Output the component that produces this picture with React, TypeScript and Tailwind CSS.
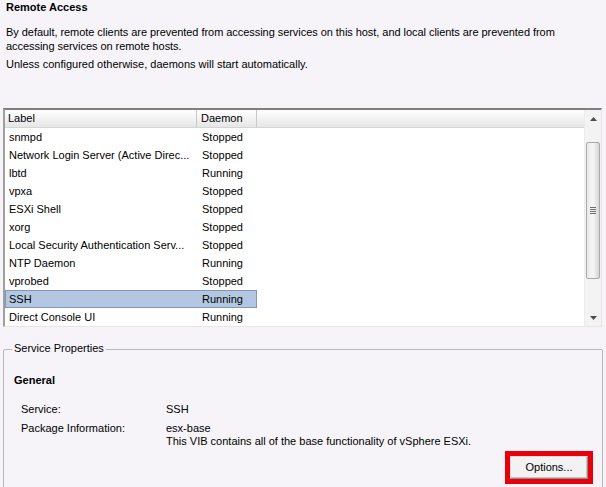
import React from 'react';

const rows: [string, string][] = [
  ['snmpd', 'Stopped'],
  ['Network Login Server (Active Direc...', 'Stopped'],
  ['lbtd', 'Running'],
  ['vpxa', 'Stopped'],
  ['ESXi Shell', 'Stopped'],
  ['xorg', 'Stopped'],
  ['Local Security Authentication Serv...', 'Stopped'],
  ['NTP Daemon', 'Running'],
  ['vprobed', 'Stopped'],
  ['SSH', 'Running'],
  ['Direct Console UI', 'Running'],
];

function ScrollBar() {
  return (
    <div className="w-[17px] flex flex-col bg-[#f3f3f3] border-l border-[#ececec]">
      <div className="h-[17px] flex items-center justify-center">
        <svg width="7" height="4" viewBox="0 0 7 4">
          <path d="M0 4 L3.5 0 L7 4 Z" fill="#4d4d4d" />
        </svg>
      </div>
      <div className="mt-[15px] mx-[1px] h-[137px] rounded-[2px] border border-[#a9a9a9] bg-gradient-to-r from-[#e9e9e9] via-[#f6f6f6] to-[#d6d6d6] flex items-center justify-center">
        <div className="flex flex-col gap-[1px]">
          <div className="w-[6px] h-[1px] bg-[#6f6f6f]" />
          <div className="w-[6px] h-[1px] bg-[#6f6f6f]" />
          <div className="w-[6px] h-[1px] bg-[#6f6f6f]" />
          <div className="w-[6px] h-[1px] bg-[#6f6f6f]" />
        </div>
      </div>
      <div className="flex-1" />
      <div className="h-[17px] flex items-center justify-center">
        <svg width="7" height="4" viewBox="0 0 7 4">
          <path d="M0 0 L3.5 4 L7 0 Z" fill="#4d4d4d" />
        </svg>
      </div>
    </div>
  );
}

export default function App() {
  return (
    <div
      className="w-[606px] h-[487px] overflow-hidden bg-[#f6f4f8] text-[11px] text-black leading-[13px]"
      style={{ fontFamily: '"Liberation Sans", Arial, sans-serif' }}
    >
      <div className="pl-[6px] pt-[1px] font-bold text-[11px]">Remote Access</div>
      <div className="pl-[6px] pt-[11px] pr-[30px] leading-[14px] tracking-[-0.05px]">
        By default, remote clients are prevented from accessing services on this host, and local clients are prevented from accessing services on remote hosts.
      </div>
      <div className="pl-[6px] pt-[5px]">Unless configured otherwise, daemons will start automatically.</div>

      {/* daemon list */}
      <div className="ml-[3px] mr-[4px] mt-[37px] h-[219px] flex border-t-2 border-l-2 border-t-[#7f7f7f] border-l-[#a0a0a0] border-r border-b border-r-[#e6e6e6] border-b-[#e6e6e6] bg-white">
        <div className="flex-1 flex flex-col">
          <div className="h-[18px] flex bg-gradient-to-b from-[#ffffff] to-[#e6e6e6] border-b border-[#d5d5d5]">
            <div className="w-[192px] pl-[3px] flex items-center border-r border-[#c9c9c9]">Label</div>
            <div className="w-[60px] pl-[4px] flex items-center border-r border-[#c9c9c9]">Daemon</div>
            <div className="flex-1" />
          </div>
          {rows.map(([label, state]) => (
            <div
              key={label}
              className={`h-[18px] w-[252px] flex items-center ${
                label === 'SSH' ? 'bg-[#b3c7e1] border border-[#7e98bd]' : 'border border-transparent'
              }`}
            >
              <div className="w-[192px] pl-[3px]">{label}</div>
              <div className="pl-[4px]">{state}</div>
            </div>
          ))}
        </div>
        <ScrollBar />
      </div>

      {/* service properties */}
      <div className="relative mx-[3px] mt-[22px] h-[200px] border border-[#b8b8b8] rounded-[2px]">
        <div className="absolute -top-[8px] left-[8px] px-[2px] bg-[#f6f4f8]">Service Properties</div>
        <div className="pl-[10px] pt-[24px] font-bold">General</div>
        <div className="pl-[17px] pt-[16px] grid grid-cols-[145px_1fr] gap-y-[6px]">
          <div>Service:</div>
          <div>SSH</div>
          <div>Package Information:</div>
          <div>
            <div>esx-base</div>
            <div>This VIB contains all of the base functionality of vSphere ESXi.</div>
          </div>
        </div>
        <div className="flex justify-end pr-[9px] mt-[3px]">
          <div className="border-[5px] border-[#e8000b]">
            <button className="w-[78px] h-[23px] bg-[#f2f2f2] border border-[#dcdcdc] border-r-[#8c8c8c] border-b-[#8c8c8c] shadow-[inset_-1px_-1px_0_#c4c4c4]">
              Options...
            </button>
          </div>
        </div>
      </div>
    </div>
  );
}
